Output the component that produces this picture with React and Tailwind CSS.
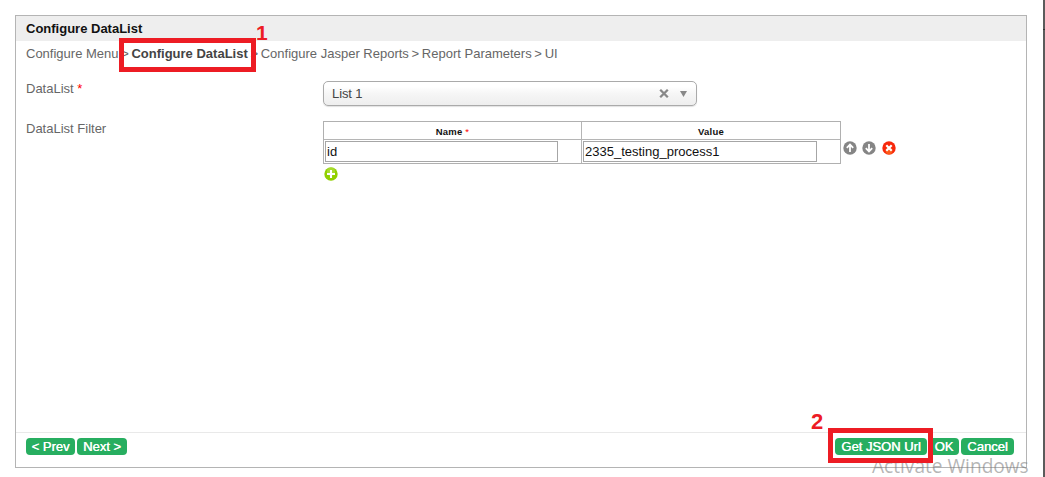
const steps = ['Configure Jasper Reports', 'Report Parameters', 'UI'];

function Round({ color, children }) {
  return (
    <svg className="block size-[14px]" viewBox="0 0 14 14">
      <circle cx="7" cy="7" r="6.7" fill={color} />
      {children}
    </svg>
  );
}

function Button({ children, width }) {
  return (
    <button className={`h-[17px] rounded-[4px] bg-[#27ae60] text-center text-[13px] leading-[17px] whitespace-nowrap text-white [text-shadow:0.35px_0_0_#fff] ${width}`}>
      {children}
    </button>
  );
}

function Select() {
  return (
    <div className="mt-px flex h-[25px] w-[374px] items-center rounded-[5px] border border-[#aaa] bg-linear-to-b from-white from-20% via-[#f6f6f6] via-50% to-[#eeeeee] pl-2 pr-[9px] text-[13px] text-[#444] shadow-[0_1px_1px_rgba(0,0,0,0.12)]">
      <span className="flex-1 tracking-[-0.1px]">List 1</span>
      <svg className="mr-[11px] h-[9px] w-[10px]" viewBox="0 0 10 9">
        <path d="M1.2 .8 8.8 8.2M8.8 .8 1.2 8.2" stroke="#888" strokeWidth="2.3" />
      </svg>
      <svg className="h-[6px] w-[7px]" viewBox="0 0 7 6">
        <path d="M0 0H7L3.5 6Z" fill="#888" />
      </svg>
    </div>
  );
}

function FilterTable() {
  return (
    <div className="grid h-[43px] w-[518px] grid-cols-[257px_258px] grid-rows-[17px_23px] gap-px border border-[#b0b0b0] bg-[#b5b5b5]">
      <div className="bg-white pt-px text-center text-[9.5px] leading-[17px] font-bold tracking-[0.2px] text-[#111]">
        Name <span className="font-normal text-[#f00]">*</span>
      </div>
      <div className="bg-white pt-px text-center text-[9.5px] leading-[17px] font-bold tracking-[0.2px] text-[#111]">Value</div>
      <div className="bg-white p-px">
        <div className="h-[21px] w-[233px] border border-[#a6a6a6] pl-px text-[13px] leading-[19px] text-[#111]">id</div>
      </div>
      <div className="bg-white p-px">
        <div className="h-[21px] w-[234px] border border-[#a6a6a6] pl-px text-[13px] leading-[19px] text-[#111]">2335_testing_process1</div>
      </div>
    </div>
  );
}

export default function App() {
  return (
    <div className="relative flex h-[477px] w-[1045px] justify-between overflow-hidden bg-white pl-[15px] font-['Liberation_Sans',Arial,sans-serif] text-[13px] text-[#666]">
      <main className="mt-[15px] flex h-[453px] w-[1012px] flex-col border border-[#b4b4b4]">
        <h1 className="h-[25px] bg-[#eee] pl-[10px] text-[13px] leading-[25px] font-bold text-[#111]">Configure DataList</h1>
        <nav className="flex h-[25px] gap-[2.7px] pl-[10px] leading-[25px] whitespace-nowrap">
          <span>Configure Menu</span>
          <span>&gt;</span>
          <b className="text-[#444]">Configure DataList</b>
          {steps.map((step) => (
            <span key={step} className="flex gap-[2.7px]">
              <span>&gt;</span>
              <span>{step}</span>
            </span>
          ))}
        </nav>
        <div className="mt-[14px] flex h-[40px] pl-[10px]">
          <label className="w-[297px] pt-px leading-[15px]">DataList <span className="text-[#f00]">*</span></label>
          <Select />
        </div>
        <div className="flex pl-[10px]">
          <label className="w-[297px] pt-px leading-[15px]">DataList Filter</label>
          <div className="pt-px">
            <FilterTable />
            <div className="pt-[3px] pl-px">
              <Round color="#91d000">
                <circle cx="7" cy="4.5" r="4" fill="#bce65a" opacity=".5" />
                <path d="M7 3V11M3 7H11" stroke="#fff" strokeWidth="2.1" />
              </Round>
            </div>
          </div>
          <div className="mt-[21px] ml-[2px] flex h-[14px]">
            <Round color="#858585">
              <path d="M7 11V4M3.8 6.8 7 3.6 10.2 6.8" fill="none" stroke="#fff" strokeWidth="1.8" />
            </Round>
            <span className="ml-[5px]">
              <Round color="#858585">
                <path d="M7 3V10M3.8 7.2 7 10.4 10.2 7.2" fill="none" stroke="#fff" strokeWidth="1.8" />
              </Round>
            </span>
            <span className="ml-[6px]">
              <Round color="#f7280b">
                <circle cx="7" cy="10" r="3.4" fill="#ff7a20" opacity=".6" />
                <path d="M4.3 4.3 9.7 9.7M9.7 4.3 4.3 9.7" stroke="#fff" strokeWidth="2.2" />
              </Round>
            </span>
          </div>
        </div>
        <footer className="mt-auto flex h-[35px] gap-[2px] border-t border-[#e9e9e9] pt-[5px] pr-3 pl-[10px]">
          <Button width="w-[49px]">&lt; Prev</Button>
          <Button width="w-[50px]">Next &gt;</Button>
          <div className="ml-auto flex gap-[2px]">
            <Button width="w-[92px]">Get JSON Url</Button>
            <Button width="w-[30px]">OK</Button>
            <Button width="w-[53px]">Cancel</Button>
          </div>
        </footer>
      </main>
      <aside className="h-full w-[2px] bg-[#5b5b5b] pt-[29px]">
        <div className="h-px bg-[#333]" />
      </aside>
      <span className="absolute top-[456px] left-[872px] font-['Open_Sans',sans-serif] text-[19.1px] leading-[21px] whitespace-nowrap text-[#777]/55">Activate Windows</span>
      <div className="absolute top-[38px] left-[119px] h-[34px] w-[137px] border-[5px] border-[#ed1c24]" />
      <span className="absolute top-[23px] left-[256px] text-[21px] leading-[20px] font-bold text-[#ed1c24]">1</span>
      <div className="absolute top-[428px] left-[828px] h-[35px] w-[105px] border-[5px] border-[#ed1c24]" />
      <span className="absolute top-[411px] left-[811px] text-[22px] leading-[22px] font-bold text-[#ed1c24]">2</span>
    </div>
  );
}
